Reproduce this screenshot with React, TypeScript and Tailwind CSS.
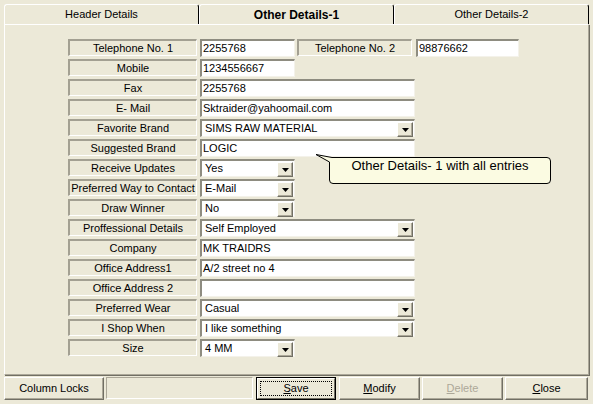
type Field = {
  label: string
  value: string
  kind: 'text' | 'select'
  wide: boolean
}

const fields: Field[] = [
  { label: 'Mobile', value: '1234556667', kind: 'text', wide: false },
  { label: 'Fax', value: '2255768', kind: 'text', wide: true },
  { label: 'E- Mail', value: 'Sktraider@yahoomail.com', kind: 'text', wide: true },
  { label: 'Favorite Brand', value: 'SIMS RAW MATERIAL', kind: 'select', wide: true },
  { label: 'Suggested Brand', value: 'LOGIC', kind: 'text', wide: true },
  { label: 'Receive Updates', value: 'Yes', kind: 'select', wide: false },
  { label: 'Preferred Way to Contact', value: 'E-Mail', kind: 'select', wide: false },
  { label: 'Draw Winner', value: 'No', kind: 'select', wide: false },
  { label: 'Proffessional Details', value: 'Self Employed', kind: 'select', wide: true },
  { label: 'Company', value: 'MK TRAIDRS', kind: 'text', wide: true },
  { label: 'Office Address1', value: 'A/2 street no 4', kind: 'text', wide: true },
  { label: 'Office Address 2', value: '', kind: 'text', wide: true },
  { label: 'Preferred Wear', value: 'Casual', kind: 'select', wide: true },
  { label: 'I Shop When', value: 'I like something', kind: 'select', wide: true },
  { label: 'Size', value: '4 MM', kind: 'select', wide: false },
]

function FieldLabel({ text, className }: { text: string; className: string }) {
  return (
    <div
      className={`${className} h-[17px] flex items-center justify-center whitespace-nowrap border-t-2 border-l-2 border-b border-r border-t-[#A3A092] border-l-[#A3A092] border-b-white border-r-white leading-none`}
    >
      {text}
    </div>
  )
}

function DropButton() {
  return (
    <div className="absolute right-[1px] top-[1px] w-[16px] h-[15px] bg-[#ECE9D8] border-t border-l border-b border-r border-t-white border-l-white border-b-[#716F64] border-r-[#716F64] shadow-[inset_-1px_-1px_0_#ACA899] flex items-center justify-center">
      <svg width="7" height="4" viewBox="0 0 7 4">
        <path d="M0 0H7L3.5 4Z" fill="#000" />
      </svg>
    </div>
  )
}

function Box({ value, kind, className }: { value: string; kind: 'text' | 'select'; className: string }) {
  return (
    <div
      className={`${className} relative h-[18px] bg-white border-t-2 border-l-2 border-b border-r border-t-[#8E8C80] border-l-[#8E8C80] border-b-[#F4F2EA] border-r-[#F4F2EA] flex items-center pl-[1px] ${kind === 'select' ? 'pl-[3px]' : ''} leading-none whitespace-nowrap`}
    >
      {value}
      {kind === 'select' && <DropButton />}
    </div>
  )
}

function Tab({ text, bold }: { text: string; bold?: boolean }) {
  return (
    <div
      className={`h-[20px] flex-1 flex items-center justify-center border-t border-l border-r border-t-white border-l-white border-r-black rounded-t-[3px] ${bold ? 'font-bold text-[12px]' : ''}`}
    >
      {text}
    </div>
  )
}

function Btn({ children, className, disabled }: { children: React.ReactNode; className: string; disabled?: boolean }) {
  return (
    <div
      className={`${className} h-[23px] flex items-center justify-center bg-[#ECE9D8] border-t border-l border-b border-r border-t-white border-l-white border-b-[#716F64] border-r-[#716F64] shadow-[inset_-1px_-1px_0_#ACA899] ${disabled ? 'text-[#ACA899]' : ''}`}
    >
      {children}
    </div>
  )
}

export default function App() {
  return (
    <div className="relative w-[593px] h-[404px] bg-[#ECE9D8] text-black text-[11px] font-['Liberation_Sans',Arial,sans-serif] flex flex-col overflow-hidden">
      {/* tabs */}
      <div className="flex w-[585px] ml-[4px] mt-[4px]">
        <Tab text="Header Details" />
        <Tab text="Other Details-1" bold />
        <Tab text="Other Details-2" />
      </div>

      {/* panel */}
      <div className="ml-[4px] w-[585px] h-[351px] border-t border-l border-b border-r border-t-white border-l-white border-b-[#ACA899] border-r-[#ACA899] shadow-[1px_1px_0_#716F64] pt-[14px] pl-[63px] flex flex-col">
        <div className="h-[20px] flex items-start">
          <FieldLabel text="Telephone No. 1" className="w-[129px]" />
          <Box value="2255768" kind="text" className="ml-[3px] w-[95px]" />
          <FieldLabel text="Telephone No. 2" className="ml-[2px] w-[115px]" />
          <Box value="98876662" kind="text" className="ml-[4px] w-[103px]" />
        </div>
        {fields.map((f) => (
          <div key={f.label} className="h-[20px] flex items-start">
            <FieldLabel text={f.label} className="w-[129px]" />
            <Box value={f.value} kind={f.kind} className={f.wide ? 'ml-[3px] w-[215px]' : 'ml-[3px] w-[95px]'} />
          </div>
        ))}
      </div>

      {/* bottom bar */}
      <div className="mt-[2px] flex items-start pl-[4px]">
        <Btn className="w-[100px]">Column Locks</Btn>
        <div className="ml-[2px] w-[147px] h-[22px] border-t border-l border-b border-r border-t-[#ACA899] border-l-[#ACA899] border-b-white border-r-white" />
        <div className="ml-[3px] w-[80px] h-[23px] border border-black">
          <div className="w-full h-full flex items-center justify-center bg-[#ECE9D8] border-t border-l border-b border-r border-t-white border-l-white border-b-[#716F64] border-r-[#716F64] relative">
            <div className="absolute inset-[2px] border border-dotted border-black" />
            <span>
              <span className="underline">S</span>ave
            </span>
          </div>
        </div>
        <Btn className="ml-[3px] w-[81px]">
          <span>
            <span className="underline">M</span>odify
          </span>
        </Btn>
        <Btn className="ml-[2px] w-[81px]" disabled>
          <span>
            <span className="underline">D</span>elete
          </span>
        </Btn>
        <Btn className="ml-[2px] w-[83px]">
          <span>
            <span className="underline">C</span>lose
          </span>
        </Btn>
      </div>

      {/* callout */}
      <svg className="absolute left-0 top-0 pointer-events-none" width="593" height="404">
        <path
          d="M316 154.5 L332 157.5 L547 157.5 Q550.5 157.5 550.5 161 L550.5 180 Q550.5 183.5 547 183.5 L333 183.5 Q329.5 183.5 329.5 180 L329.5 162 Z"
          fill="#FBFBE2"
          stroke="#000"
          strokeWidth="1"
        />
      </svg>
      <div className="absolute left-[329px] top-[158px] w-[222px] text-center text-[13px] leading-[16px]">
        Other Details- 1 with all entries
      </div>
    </div>
  )
}
